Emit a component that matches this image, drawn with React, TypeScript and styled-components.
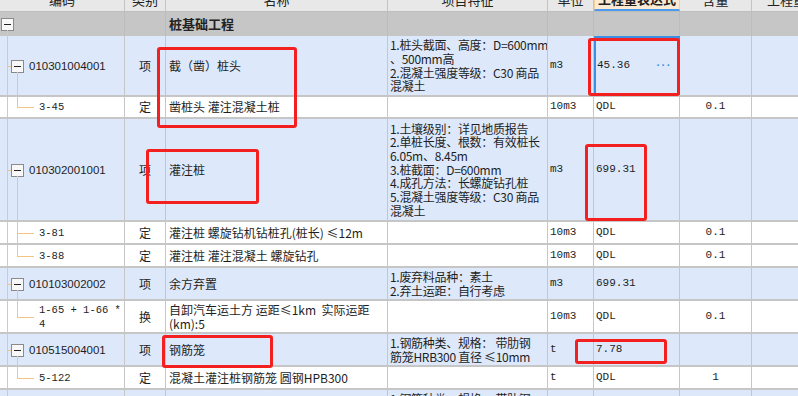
import React from 'react';
import styled, { createGlobalStyle, css } from 'styled-components';

const GlobalStyle = createGlobalStyle`
  html, body {
    margin: 0;
    padding: 0;
    background: #ffffff;
    overflow: hidden;
  }
  body {
    font-family: "Noto Sans CJK SC", "Noto Sans", sans-serif;
    font-size: 12px;
    color: #1e1e1e;
  }
`;

const TREE = '#f6c481';
const GRID = '#c6c6c6';
const COLS = '125px 41px 222px 160px 46px 86px 72px 70px';

const Sheet = styled.div`
  position: relative;
  width: 798px;
  height: 396px;
  overflow: hidden;
`;

// header is scrolled half out of view in the screenshot
const Table = styled.div`
  margin-top: -12px;
`;

type Tone = 'head' | 'group' | 'blue' | 'white';

const toneBg: Record<Tone, string> = {
  head: '#e8e8e8',
  group: '#c6c6c6',
  blue: '#dde9fb',
  white: '#ffffff',
};

const Row = styled.div<{ $h: number; $tone: Tone }>`
  display: grid;
  grid-template-columns: ${COLS};
  height: ${p => p.$h}px;
  box-sizing: border-box;
  background: ${p => toneBg[p.$tone]};
  border-bottom: ${p => (p.$tone === 'group' ? 'none' : p.$tone === 'head' ? '1px solid #bdbdbd' : `2px solid ${GRID}`)};
`;

const Cell = styled.div<{ $align?: 'left' | 'center'; $pad?: number; $mono?: boolean }>`
  display: flex;
  align-items: center;
  justify-content: ${p => (p.$align === 'center' ? 'center' : 'flex-start')};
  padding-left: ${p => p.$pad ?? 3}px;
  box-sizing: border-box;
  border-right: 1px solid ${GRID};
  white-space: pre;
  line-height: 13.7px;
  overflow: hidden;
  ${p =>
    p.$mono &&
    css`
      font-family: "Liberation Mono", "Noto Sans CJK SC", monospace;
      font-size: 11px;
    `}
`;

const FeatureCell = styled(Cell)`
  letter-spacing: -0.3px;
`;

const HeadCell = styled.div<{ $active?: boolean }>`
  display: flex;
  align-items: center;
  justify-content: center;
  box-sizing: border-box;
  border-right: 1px solid ${p => (p.$active ? '#f2cf9c' : '#c4c4c4')};
  font-size: 13px;
  color: #222;
  ${p =>
    p.$active &&
    css`
      background: #fcebd2;
      font-weight: bold;
      border-left: 1px solid #f2cf9c;
      border-bottom: 2px solid #4a9bf0;
    `}
`;

const GroupTitle = styled(Cell)`
  font-size: 13px;
  font-weight: bold;
  color: #222;
  border-right-color: #bcbcbc;
`;

const GroupBlank = styled.div`
  border-right: 1px solid #bcbcbc;
`;

const Toggle = styled.span`
  display: block;
  width: 13px;
  height: 13px;
  box-sizing: border-box;
  border: 1px solid #8a8a8a;
  background: linear-gradient(#222, #222) center / 7px 1px no-repeat, #f8f8f8;
`;

const GroupCode = styled.div`
  position: relative;
  display: flex;
  align-items: center;
  padding-left: 1px;
  border-right: 1px solid #bcbcbc;
  &::after {
    content: '';
    position: absolute;
    left: 7px;
    top: calc(50% + 6px);
    bottom: 0;
    width: 1px;
    background: ${TREE};
  }
`;

const CodeCell = styled.div<{ $level: 'item' | 'leaf'; $last?: boolean }>`
  position: relative;
  display: flex;
  align-items: center;
  box-sizing: border-box;
  border-right: 1px solid ${GRID};
  padding-left: ${p => (p.$level === 'leaf' ? 39 : 29)}px;
  background: linear-gradient(${TREE}, ${TREE}) 7px 0 / 1px 100% no-repeat;
  line-height: 14px;
  white-space: pre;
  overflow: hidden;
  ${p =>
    p.$level === 'item'
      ? css`
          font-family: "Liberation Sans", Arial, sans-serif;
          font-size: 11.5px;
          &::before {
            content: '';
            position: absolute;
            left: 7px;
            width: 4px;
            top: 50%;
            height: 1px;
            background: ${TREE};
          }
          &::after {
            content: '';
            position: absolute;
            left: 17px;
            width: 1px;
            top: calc(50% + 6px);
            bottom: 0;
            background: ${TREE};
          }
        `
      : css`
          font-family: "Liberation Mono", monospace;
          font-size: 10.5px;
          &::before {
            content: '';
            position: absolute;
            left: 17px;
            width: 1px;
            top: 0;
            bottom: ${p.$last ? '50%' : '0'};
            background: ${TREE};
          }
          &::after {
            content: '';
            position: absolute;
            left: 17px;
            width: 17px;
            top: 50%;
            height: 1px;
            background: ${TREE};
          }
        `}
`;

const ItemToggle = styled(Toggle)`
  position: absolute;
  left: 11px;
  top: calc(50% - 6px);
`;

const ExprCell = styled(Cell)<{ $selected?: boolean }>`
  justify-content: space-between;
  padding-right: 8px;
  ${p =>
    p.$selected &&
    css`
      border: 2px solid #3d8fe6;
      padding-left: 1px;
    `}
`;

const More = styled.span`
  color: #3d8fe6;
  font-weight: bold;
  letter-spacing: -1.5px;
`;

const Mark = styled.div<{ $x: number; $y: number; $w: number; $h: number }>`
  position: absolute;
  left: ${p => p.$x}px;
  top: ${p => p.$y}px;
  width: ${p => p.$w}px;
  height: ${p => p.$h}px;
  box-sizing: border-box;
  border: 3px solid #f41f1f;
  border-radius: 3px;
  pointer-events: none;
`;

interface Line {
  level: 'item' | 'leaf';
  code: string;
  type: string;
  name: string;
  feature?: string;
  unit: string;
  expr: string;
  qty?: string;
  h: number;
  last?: boolean;
  selected?: boolean;
}

const lines: Line[] = [
  {
    level: 'item', code: '010301004001', type: '项', name: '截（凿）桩头',
    feature: '1.桩头截面、高度：D=600mm\n、500mm高\n2.混凝土强度等级：C30 商品\n混凝土',
    unit: 'm3', expr: '45.36', h: 61, selected: true,
  },
  { level: 'leaf', code: '3-45', type: '定', name: '凿桩头 灌注混凝土桩', unit: '10m3', expr: 'QDL', qty: '0.1', h: 22, last: true },
  {
    level: 'item', code: '010302001001', type: '项', name: '灌注桩',
    feature: '1.土壤级别：详见地质报告\n2.单桩长度、根数：有效桩长\n6.05m、8.45m\n3.桩截面：D=600mm\n4.成孔方法：长螺旋钻孔桩\n5.混凝土强度等级：C30 商品\n混凝土',
    unit: 'm3', expr: '699.31', h: 103,
  },
  { level: 'leaf', code: '3-81', type: '定', name: '灌注桩 螺旋钻机钻桩孔(桩长) ≤12m', unit: '10m3', expr: 'QDL', qty: '0.1', h: 23 },
  { level: 'leaf', code: '3-88', type: '定', name: '灌注桩 灌注混凝土 螺旋钻孔', unit: '10m3', expr: 'QDL', qty: '0.1', h: 23, last: true },
  {
    level: 'item', code: '010103002002', type: '项', name: '余方弃置',
    feature: '1.废弃料品种：素土\n2.弃土运距：自行考虑', unit: 'm3', expr: '699.31', h: 33,
  },
  {
    level: 'leaf', code: '1-65 + 1-66 *\n4', type: '换', name: '自卸汽车运土方 运距≤1km  实际运距\n(km):5',
    unit: '10m3', expr: 'QDL', qty: '0.1', h: 33, last: true,
  },
  {
    level: 'item', code: '010515004001', type: '项', name: '钢筋笼',
    feature: '1.钢筋种类、规格： 带肋钢\n筋笼HRB300 直径 ≤10mm', unit: 't', expr: '7.78', h: 33,
  },
  { level: 'leaf', code: '5-122', type: '定', name: '混凝土灌注桩钢筋笼 圆钢HPB300', unit: 't', expr: 'QDL', qty: '1', h: 23, last: true },
  {
    level: 'item', code: '010515004002', type: '项', name: '钢筋笼',
    feature: '1.钢筋种类、规格： 带肋钢\n筋笼HRB400 直径 ＞10mm\n2.其他\n混凝土', unit: 't', expr: '12.5', h: 61,
  },
];

const headers = ['编码', '类别', '名称', '项目特征', '单位', '工程量表达式', '含量', '工程量'];

const App: React.FC = () => (
  <Sheet>
    <GlobalStyle />
    <Table>
      <Row $h={24} $tone="head">
        {headers.map((h, i) => (
          <HeadCell key={h} $active={i === 5}>{h}</HeadCell>
        ))}
      </Row>

      <Row $h={24} $tone="group">
        <GroupCode><Toggle /></GroupCode>
        <GroupBlank />
        <GroupTitle>桩基础工程</GroupTitle>
        <GroupBlank />
        <GroupBlank />
        <GroupBlank />
        <GroupBlank />
        <GroupBlank />
      </Row>

      {lines.map((l, i) => (
        <Row key={i} $h={l.h} $tone={l.level === 'item' ? 'blue' : 'white'}>
          <CodeCell $level={l.level} $last={l.last}>
            {l.level === 'item' && <ItemToggle />}
            <span>{l.code}</span>
          </CodeCell>
          <Cell $align="center" $pad={0}>{l.type}</Cell>
          <Cell>{l.name}</Cell>
          <FeatureCell $pad={2}>{l.feature ?? ''}</FeatureCell>
          <Cell $pad={2} $mono>{l.unit}</Cell>
          <ExprCell $pad={2} $mono $selected={l.selected}>
            <span>{l.expr}</span>
            {l.selected && <More>···</More>}
          </ExprCell>
          <Cell $align="center" $pad={0} $mono>{l.qty ?? ''}</Cell>
          <Cell />
        </Row>
      ))}
    </Table>

    <Mark $x={157} $y={47} $w={140} $h={81} />
    <Mark $x={146} $y={149} $w={113} $h={55} />
    <Mark $x={588} $y={38} $w={92} $h={58} />
    <Mark $x={585} $y={144} $w={62} $h={77} />
    <Mark $x={162} $y={335} $w={111} $h={33} />
    <Mark $x={575} $y={339} $w={92} $h={25} />
  </Sheet>
);

export default App;
